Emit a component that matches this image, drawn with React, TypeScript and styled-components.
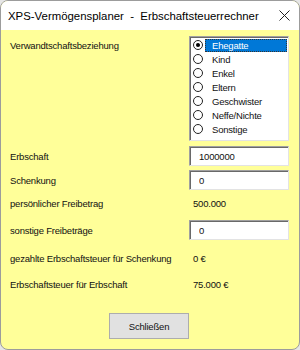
import React, { useState } from "react";
import styled, { createGlobalStyle } from "styled-components";

const Global = createGlobalStyle`
  html, body { margin: 0; padding: 0; background: #e6e6e6; }
  * { box-sizing: border-box; }
`;

const Window = styled.div`
  width: 300px;
  height: 350px;
  border: 1px solid #9c9c9c;
  border-radius: 8px;
  overflow: hidden;
  display: flex;
  flex-direction: column;
  background: #ffff99;
  font-family: "Liberation Sans", Arial, sans-serif;
  color: #111;
`;

const TitleBar = styled.div`
  height: 29px;
  background: #ffffff;
  display: flex;
  align-items: center;
  justify-content: space-between;
  padding: 0 9px 0 7px;
  font-size: 11.4px;
  color: #000;
  white-space: pre;
`;

const Body = styled.div`
  flex: 1;
  display: flex;
  flex-direction: column;
  padding: 6px 10px 0 9px;
  font-size: 9.5px;
  letter-spacing: -0.2px;
  white-space: nowrap;
`;

const Row = styled.div<{ $mt: number; $h: number; $top?: boolean }>`
  display: flex;
  align-items: ${(p) => (p.$top ? "flex-start" : "center")};
  margin-top: ${(p) => p.$mt}px;
  height: ${(p) => p.$h}px;
`;

const Label = styled.div<{ $pt?: number }>`
  width: 179px;
  padding-top: ${(p) => p.$pt ?? 0}px;
`;

const Value = styled.div`
  padding-left: 4px;
`;

const sunken = `
  border-top: 1px solid #a0a0a0;
  border-left: 1px solid #a0a0a0;
  border-right: 1px solid #e3e3e3;
  border-bottom: 1px solid #e3e3e3;
  box-shadow: inset 1px 1px 0 #696969;
`;

const ListBox = styled.div`
  width: 100px;
  height: 105px;
  background: #fff;
  ${sunken}
  padding: 1px 1px 0 2px;
  display: flex;
  flex-direction: column;
`;

const Item = styled.div`
  height: 14px;
  display: flex;
  align-items: center;
  cursor: default;
`;

const Radio = styled.span<{ $on: boolean }>`
  width: 10px;
  height: 10px;
  flex: none;
  border-radius: 50%;
  border: 1px solid #222;
  margin: 0 2px 0 1px;
  display: flex;
  align-items: center;
  justify-content: center;
  &::after {
    content: "";
    width: 4px;
    height: 4px;
    border-radius: 50%;
    background: ${(p) => (p.$on ? "#000" : "transparent")};
  }
`;

const ItemText = styled.span<{ $on: boolean }>`
  flex: 1;
  height: 13px;
  display: flex;
  align-items: center;
  padding-left: 7px;
  background: ${(p) => (p.$on ? "#0078d7" : "transparent")};
  color: ${(p) => (p.$on ? "#fff" : "#111")};
  outline: ${(p) => (p.$on ? "1px dotted #333" : "none")};
  outline-offset: -1px;
`;

const TextBox = styled.input`
  width: 100px;
  height: 20px;
  ${sunken}
  background: #fff;
  font: inherit;
  letter-spacing: inherit;
  color: #111;
  padding: 0 0 0 9px;
  outline: none;
`;

const Footer = styled.div`
  display: flex;
  justify-content: center;
  margin-top: 19px;
  padding-right: 1px;
`;

const Button = styled.button`
  width: 80px;
  height: 26px;
  background: #e1e1e1;
  border: 1px solid #adadad;
  font: inherit;
  letter-spacing: inherit;
  color: #111;
  padding: 0;
`;

const Close = () => (
  <svg width="11" height="11" viewBox="0 0 11 11">
    <path d="M0.5 0.5 L10.5 10.5 M10.5 0.5 L0.5 10.5" stroke="#222" strokeWidth="1" />
  </svg>
);

const items = ["Ehegatte", "Kind", "Enkel", "Eltern", "Geschwister", "Neffe/Nichte", "Sonstige"];

export default function App() {
  const [sel, setSel] = useState(0);
  return (
    <>
      <Global />
      <Window>
        <TitleBar>
          <span>XPS-Vermögensplaner  -  Erbschaftsteuerrechner</span>
          <Close />
        </TitleBar>
        <Body>
          <Row $mt={0} $h={105} $top>
            <Label $pt={4}>Verwandtschaftsbeziehung</Label>
            <ListBox>
              {items.map((t, i) => (
                <Item key={t} onClick={() => setSel(i)}>
                  <Radio $on={i === sel} />
                  <ItemText $on={i === sel}>{t}</ItemText>
                </Item>
              ))}
            </ListBox>
          </Row>
          <Row $mt={5} $h={20}>
            <Label>Erbschaft</Label>
            <TextBox defaultValue="1000000" />
          </Row>
          <Row $mt={4} $h={20}>
            <Label>Schenkung</Label>
            <TextBox defaultValue="0" />
          </Row>
          <Row $mt={3} $h={20}>
            <Label>persönlicher Freibetrag</Label>
            <Value>500.000</Value>
          </Row>
          <Row $mt={7} $h={20}>
            <Label>sonstige Freibeträge</Label>
            <TextBox defaultValue="0" />
          </Row>
          <Row $mt={8} $h={20}>
            <Label>gezahlte Erbschaftsteuer für Schenkung</Label>
            <Value>0 €</Value>
          </Row>
          <Row $mt={6} $h={20}>
            <Label>Erbschaftsteuer für Erbschaft</Label>
            <Value>75.000 €</Value>
          </Row>
          <Footer>
            <Button>Schließen</Button>
          </Footer>
        </Body>
      </Window>
    </>
  );
}
